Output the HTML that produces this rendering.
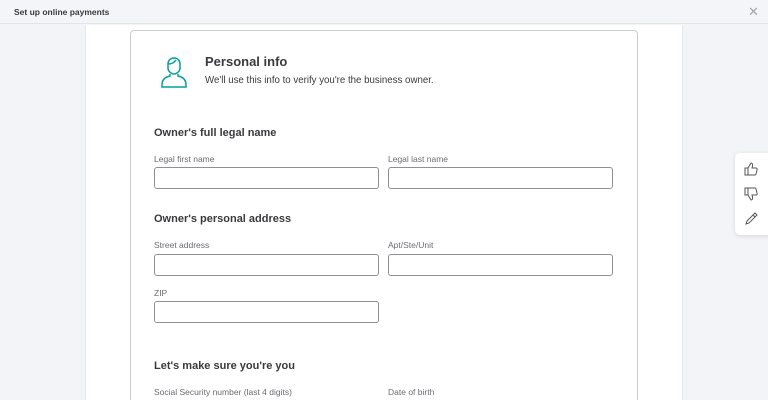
<!DOCTYPE html>
<html style="width:768px;height:400px;overflow:hidden"><head><style>
*{box-sizing:border-box;margin:0;padding:0}
body{width:768px;height:400px;overflow:hidden;background:#f3f4f7;font-family:"Liberation Sans",sans-serif;position:relative;color:#393a3d}
.hdr{position:absolute;left:0;top:0;width:768px;height:24px;border-bottom:1px solid #e3e5e8;background:#f4f5f8}
.hdr span{position:absolute;left:14px;top:7px;font-size:8.5px;font-weight:bold;color:#393a3d}
.x{position:absolute;left:748px;top:5px;font-size:13px;color:#a4a6aa;line-height:14px}
.panel{position:absolute;left:85px;top:25px;width:598px;height:375px;background:#fff;border-left:1px solid #e6e7ea;border-right:1px solid #e6e7ea}
.card{position:absolute;left:130px;top:30px;width:508px;height:380px;border:1px solid #c9cbcf;border-radius:4px;background:#fff}
.t{position:absolute;white-space:nowrap}
.h1{font-size:13px;font-weight:bold;color:#393a3d}
.h2{font-size:11px;font-weight:bold;color:#393a3d}
.lb{font-size:8.5px;color:#6b6c72}
.in{position:absolute;width:225px;height:22px;border:1px solid #8d9096;border-radius:3px}
.fb{position:absolute;left:735px;top:153px;width:40px;height:82px;background:#fff;border-radius:5px;box-shadow:0 1px 4px rgba(0,0,0,.12)}
</style></head><body>
<div class="hdr"><span>Set up online payments</span></div>
<div class="x">✕</div>
<div class="panel"></div>
<div class="card"></div>
<svg style="position:absolute;left:160px;top:55px" width="28" height="34" viewBox="0 0 28 34" fill="none" stroke="#00a19a" stroke-width="1.5">
<path d="M14 3c-4 0-6 3-6 6v4c0 3 3 6 6 6s6-3 6-6V9c0-3-2-6-6-6z"/>
<path d="M8 9c3 0 6-1 8-4"/>
<path d="M10 19v2c-5 1-8 4-8 9v2h24v-2c0-5-3-8-8-9v-2"/>
</svg>
<div class="t h1" style="left:205px;top:54px">Personal info</div>
<div class="t" style="left:205px;top:75px;font-size:9.7px;color:#393a3d">We'll use this info to verify you're the business owner.</div>
<div class="t h2" style="left:154px;top:127px">Owner's full legal name</div>
<div class="t lb" style="left:154px;top:154px">Legal first name</div>
<div class="t lb" style="left:388px;top:154px">Legal last name</div>
<div class="in" style="left:154px;top:167px"></div>
<div class="in" style="left:388px;top:167px"></div>
<div class="t h2" style="left:154px;top:213px">Owner's personal address</div>
<div class="t lb" style="left:154px;top:240px">Street address</div>
<div class="t lb" style="left:388px;top:240px">Apt/Ste/Unit</div>
<div class="in" style="left:154px;top:254px"></div>
<div class="in" style="left:388px;top:254px"></div>
<div class="t lb" style="left:154px;top:288px">ZIP</div>
<div class="in" style="left:154px;top:301px"></div>
<div class="t h2" style="left:154px;top:360px">Let's make sure you're you</div>
<div class="t lb" style="left:154px;top:387px">Social Security number (last 4 digits)</div>
<div class="t lb" style="left:388px;top:387px">Date of birth</div>
<div class="fb"></div>
<svg style="position:absolute;left:743px;top:161px" width="16" height="66" viewBox="0 0 16 66" fill="none" stroke="#555" stroke-width="1">
<path d="M2 7h3v7H2zM5 7l3-5c1 0 2 1 1.5 3L9 7h4c1 0 1.5 1 1 2l-1 4c0 .7-.7 1-1 1H5"/>
<path d="M2 27h3v7H2zM5 34l3 5c1 0 2-1 1.5-3L9 34h4c1 0 1.5-1 1-2l-1-4c0-.7-.7-1-1-1H5"/>
<path d="M3 63l1-3 8-8 2 2-8 8zM10 54l2 2"/>
</svg>
</body></html>
